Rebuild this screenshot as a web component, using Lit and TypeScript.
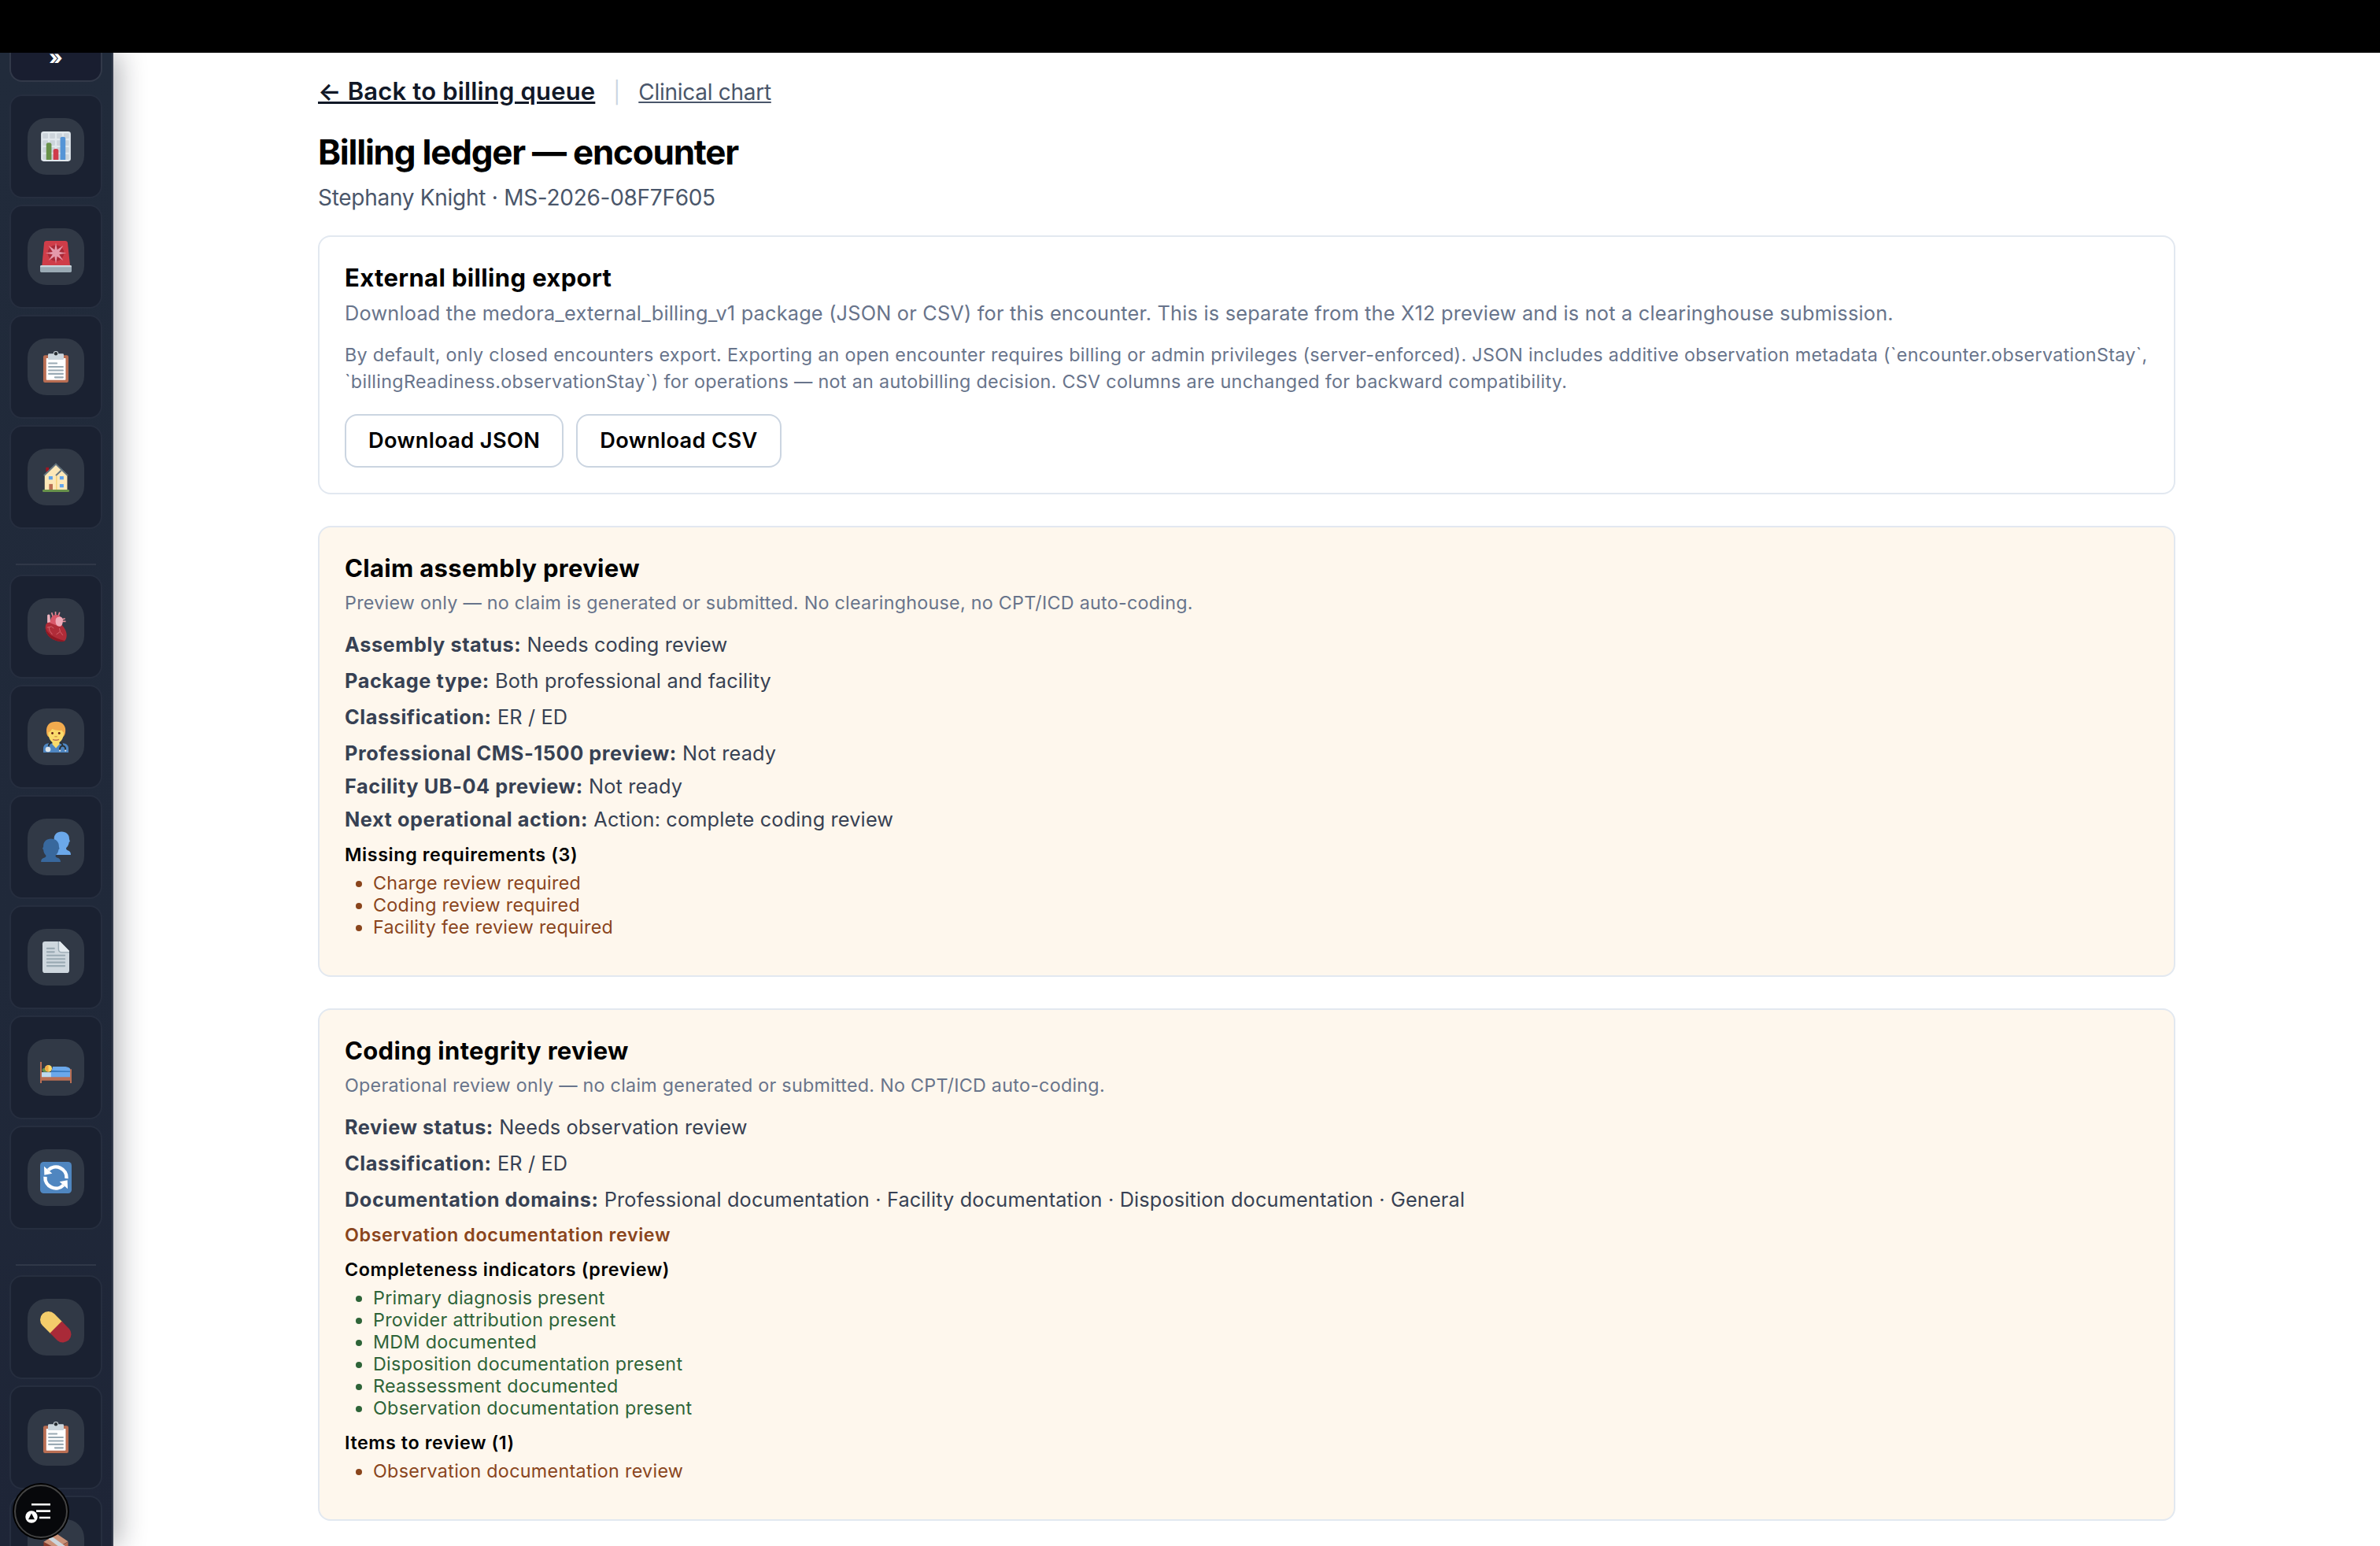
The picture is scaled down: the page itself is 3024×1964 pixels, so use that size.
import { LitElement, html, css, svg, nothing, TemplateResult } from 'lit';
import { customElement, property } from 'lit/decorators.js';

const clipboard = svg`
  <rect x="3.6" y="4.8" width="28.8" height="31.2" rx="2" fill="#b96e53" />
  <rect x="7" y="8" width="22.2" height="25" rx="0.6" fill="#fff" />
  <circle cx="18" cy="2.9" r="2.9" fill="#ccd6dd" />
  <rect x="9" y="3" width="18" height="7" rx="1.2" fill="#ccd6dd" />
  <circle cx="18" cy="2.9" r="2" fill="#292f33" />
  <path
    d="M10 14h9M10 18h16M10 22h16M10 26h16M17 30h9"
    stroke="#9aaab4" stroke-width="1.9" stroke-linecap="round"
  />`;

const icons: Record<string, TemplateResult> = {
  chart: svg`
    <rect x="1" y="1" width="34" height="34" rx="3" fill="#e1e8ed" />
    ${[3, 11, 19, 27].map((y) =>
      [3, 11, 19, 27].map(
        (x) => svg`<rect x=${x} y=${y} width="6" height="6" rx="0.8" fill="#ccd4db" />`
      )
    )}
    <path d="M7 33.4V16q0-2.2 3-2.2t3 2.2v17.4z" fill="#68924a" />
    <path d="M15 33.4V23q0-2.2 3-2.2t3 2.2v10.4z" fill="#cf3d4b" />
    <path d="M23 33.4V9.2q0-2.2 3-2.2t3 2.2v24.2z" fill="#5594d6" />`,
  siren: svg`
    <path d="M4.5 2.5Q4.8 0 7.3 0h21.4q2.5 0 2.8 2.5L34.3 29H2z" fill="#cf3d49" />
    <circle cx="18" cy="14" r="9.3" fill="#a92a38" />
    <path
      d="M18 2l1.5 8.2 6.9-4.7-4.6 7 8.2 1.5-8.2 1.5 4.6 6.9-6.9-4.6L18 26l-1.5-8.2-6.9 4.6 4.6-6.9L6 14l8.2-1.5-4.6-7 6.9 4.7z"
      fill="#e59aac"
    />
    <rect y="28" width="36" height="8" rx="1.5" fill="#9aaab4" />
    <path d="M0 30v-.6Q0 28 1.5 28h33q1.5 0 1.5 1.4v.6z" fill="#ccd6dd" />`,
  clipboard,
  house: svg`
    <path d="M6.6 12V7h3.3v5z" fill="#a01522" />
    <path d="M5.2 33V15.5L18 3l13 13v17z" fill="#fde8b8" />
    <path d="M18.8 17v16" stroke="#f0c55a" stroke-width="0.9" />
    <path
      d="M4.3 16.5L18 3.2l13.7 13.3M18 16.3l6-5.8"
      fill="none" stroke="#66757f" stroke-width="1.8"
    />
    <path d="M9.8 17h4.5v4H9.8zM22.4 17h4.5v4h-4.5zM22.4 26h4.5v4h-4.5z" fill="#61a4ec" />
    <path d="M10.2 26h4.2v7h-4.2z" fill="#b96e53" />
    <rect x="2.7" y="32.4" width="30.6" height="2.7" rx="1.2" fill="#68924a" />`,
  heart: svg`
    <path d="M8.2 14V5q1.7-2 3 0l.6 9z" fill="#efb4c0" />
    <path
      d="M14.5 6l-1.3-4M17.6 5V1M21 5.5l1.3-4M25 10l3.5-1.3M25 12h4.3"
      stroke="#e88d98" stroke-width="1.5" fill="none"
    />
    <path
      d="M6.5 16c1-3 4-3 6-3l10 1c4 3 8 9 7.8 14-.1 4-1.5 7-4.3 7.2C19 35 13 32.5 9.5 28.5 6.5 25 5.3 20 6.5 16z"
      fill="#b02c38"
    />
    <path
      d="M6.2 19c1 6 8 12 22 15.3-1 1-1.7 1-3.2 1C19 35 13 32.5 9.5 28.5c-2.5-3-3.6-6-3.3-9.5z"
      fill="#8e1823"
    />
    <path d="M11.5 14c0-6 2.5-9.5 6.5-9.5s7 3 6.7 8L20 17z" fill="#d9586a" />
    <path d="M18 9c3-3.5 8-2.5 8 1.5 0 5-1.5 7.3-4 7.3-4 0-5-5-4-8.8z" fill="#efabb9" />
    <path
      d="M8 19l5-1 2.5 2M10 18.5l1 4.5 3 4M22 20l1 4 3 4M22.5 24l-4 3"
      stroke="#d4626d" stroke-width="0.9" fill="none"
    />`,
  doctor: svg`
    <path d="M3.6 36v-4.5c0-3.5 2.5-6 6-6h16.8c3.5 0 6 2.5 6 6V36z" fill="#4e86c1" />
    <path d="M14 22h8v4.5L18 31l-4-4.5z" fill="#fadb6b" />
    <path
      d="M7.3 13C6.5 4.5 11 .7 18.5 .7 26 .7 30 6 28.8 13c-.3 2.5-1.5 4.5-2.5 5H9.5c-1-.5-2-2.5-2.2-5z"
      fill="#f2ab4e"
    />
    <path
      d="M9.3 13c2-.5 3.5-2.5 4.5-4 3 1.5 7 2 11 1.5.7 1.5 1.3 2 2.2 2.5 0 7-3.5 12.5-9 12.5S9.3 20 9.3 13z"
      fill="#fadb6b"
    />
    <circle cx="14" cy="13.9" r="1.3" fill="#662113" />
    <circle cx="21.8" cy="13.9" r="1.3" fill="#662113" />
    <path d="M16.5 17.8h3" stroke="#c88a3e" stroke-width="1" />
    <path d="M14.5 21c2 1 5 1 7 0" stroke="#b96e53" stroke-width="1.4" fill="none" />
    <path
      d="M13 24.5c-2 .5-3 2-3.5 4.5M22.5 24.5c2 .5 3 2 3.3 3.5M22.5 33c0-6 6.5-6 6.5 0"
      stroke="#292f33" stroke-width="1.7" fill="none"
    />
    <circle cx="9" cy="32.4" r="3" fill="#dfe5ea" />
    <circle cx="22.6" cy="33.8" r="1" fill="#dfe5ea" />
    <circle cx="29" cy="33.8" r="1" fill="#dfe5ea" />`,
  people: svg`
    <path
      d="M16 9.5C15.5 4 19 .5 24.5 .5S33.5 4 33.3 9l.8 2.6-1 .8c-.3 3-1.6 5-3.2 6.6-.5 1.2 0 2.3 1.5 2.8 2.5.9 3.7 2.2 3.7 5.2H15V16z"
      fill="#6ba8ea"
    />
    <path
      d="M3.7 17.5C3.5 12 7 8.5 12.5 8.5s9.2 3.5 9 9l.6 2.6-1 .8c-.4 3-1.5 5-3.3 6.5-.5 1.2 0 2.2 1.5 2.7 2.8.9 4 2.2 4.1 4.9H1c0-3 1.5-4 4-4.9 1.5-.5 2-1.5 1.5-2.7C4.8 26 3.9 24 3.7 21l-1-.9z"
      fill="#38689d"
    />`,
  document: svg`
    <path d="M5.7 0H22.5L33.3 10.8V33q0 3-3 3H5.7q-3 0-3-3V3q0-3 3-3z" fill="#ced7de" />
    <path d="M21 0v8.5q0 4 4 4h8.3" fill="none" stroke="#9aaab4" stroke-width="1.2" />
    <path d="M22 0h.8L33.3 10.8v.9H25q-3 0-3-3z" fill="#e4eaef" />
    <path
      d="M8 8h8M8 12h8M8 16h20M8 20h20M8 24h20M8 28h20"
      stroke="#9aaab4" stroke-width="1.9" stroke-linecap="round"
    />`,
  bed: svg`
    <ellipse cx="5.5" cy="21" rx="3.2" ry="2.3" fill="#68924a" />
    <path d="M1.8 23.5h11V30h-11z" fill="#bddbf0" />
    <path d="M12.5 30v-6l2-7H29q4 .5 5.3 2.5V30z" fill="#6ba8ea" />
    <path d="M13 21.3q11 .7 21.3 .7v1.5H12.8z" fill="#3b7cc0" />
    <circle cx="9.5" cy="19.2" r="4" fill="#fadb6b" />
    <path d="M9.5 15.2v7.8q-4-1-4-3.9t4-3.9z" fill="#f2a843" />
    <path d="M.9 11.7V36M35.1 20v16" stroke="#b96e53" stroke-width="1.8" />
    <path d="M1 29h34v4H1z" fill="#b96e53" />`,
  refresh: svg`
    <rect width="36" height="36" rx="4" fill="#4f86c0" />
    <path
      d="M9.3 9.5A12.2 12.2 0 0 1 30.2 19M26.7 26.5A12.2 12.2 0 0 1 5.8 17"
      fill="none" stroke="#fff" stroke-width="4"
    />
    <path d="M4.5 5.2l.3 9.8 9-1.7zM31.5 30.8l-.3-9.8-9 1.7z" fill="#fff" />`,
  pill: svg`
    <path d="M9.5 9.5L18 18" stroke="#f4cd6b" stroke-width="19" stroke-linecap="round" />
    <path d="M24.7 11.3l8.5 8.5a9.5 9.5 0 0 1-13.4 13.4l-8.5-8.5z" fill="#a92a38" />`,
  package: svg`
    <path d="M4 11.5L18 19v17L4 28z" fill="#8a3a2a" />
    <path d="M32 11.5L18 19v17l14-8z" fill="#b96e53" />
    <path d="M4 11.5L19 2.3 32 11 18 19z" fill="#cb9278" />
    <path d="M9.5 8L13.5 5.5 29 16.5 24 19z" fill="#ccd6dd" />`,
};

const navGroups = [
  ['chart', 'siren', 'clipboard', 'house'],
  ['heart', 'doctor', 'people', 'document', 'bed', 'refresh'],
  ['pill', 'clipboard', 'package'],
];

@customElement('side-nav')
export class SideNav extends LitElement {
  static styles = css`
    :host {
      display: flex;
      flex-direction: column;
      flex: none;
      box-sizing: border-box;
      width: 144px;
      padding: 0 12px;
      border-right: 2px solid #333b4b;
      background: linear-gradient(180deg, #212b3b 0%, #20293a 60%, #1e2537 100%);
      box-shadow: 8px 0 32px rgba(15, 18, 30, 0.31);
      z-index: 1;
    }
    .toggle {
      box-sizing: border-box;
      flex: none;
      height: 37px;
      margin-bottom: 16px;
      border: 2px solid #323949;
      border-top: 0;
      border-radius: 0 0 16px 16px;
      background: #191e30;
      color: #fff;
      font-size: 25px;
      font-weight: 800;
      line-height: 12px;
      text-align: center;
    }
    .group {
      display: flex;
      flex-direction: column;
      flex: none;
      gap: 8px;
    }
    .group + .group {
      position: relative;
      margin-top: 44px;
      padding-top: 14px;
    }
    .group + .group::before {
      content: '';
      position: absolute;
      top: 0;
      left: 8px;
      right: 8px;
      height: 2px;
      background: #303848;
    }
    .tile {
      box-sizing: border-box;
      display: flex;
      align-items: center;
      justify-content: center;
      height: 132px;
      border: 2px solid #262e3f;
      border-radius: 16px;
      background: #1a2131;
    }
    .badge {
      display: flex;
      align-items: center;
      justify-content: center;
      width: 72px;
      height: 72px;
      border-radius: 24px;
      background: #313946;
    }
    svg {
      width: 40px;
      height: 40px;
    }
  `;

  render() {
    return html`
      <div class="toggle">»</div>
      ${navGroups.map(
        (group) => html`
          <div class="group">
            ${group.map(
              (name) => html`
                <div class="tile">
                  <div class="badge"><svg viewBox="0 0 36 36">${icons[name]}</svg></div>
                </div>
              `
            )}
          </div>
        `
      )}
    `;
  }
}

interface Row {
  kind: 'field' | 'tight' | 'flag' | 'list';
  label: string;
  value?: string;
  tone?: string;
  items?: string[];
}

const claimRows: Row[] = [
  { kind: 'field', label: 'Assembly status:', value: 'Needs coding review' },
  { kind: 'field', label: 'Package type:', value: 'Both professional and facility' },
  { kind: 'field', label: 'Classification:', value: 'ER / ED' },
  { kind: 'field', label: 'Professional CMS-1500 preview:', value: 'Not ready' },
  { kind: 'tight', label: 'Facility UB-04 preview:', value: 'Not ready' },
  { kind: 'tight', label: 'Next operational action:', value: 'Action: complete coding review' },
  {
    kind: 'list',
    label: 'Missing requirements (3)',
    tone: 'warn',
    items: ['Charge review required', 'Coding review required', 'Facility fee review required'],
  },
];

const codingRows: Row[] = [
  { kind: 'field', label: 'Review status:', value: 'Needs observation review' },
  { kind: 'field', label: 'Classification:', value: 'ER / ED' },
  {
    kind: 'field',
    label: 'Documentation domains:',
    value:
      'Professional documentation · Facility documentation · Disposition documentation · General',
  },
  { kind: 'flag', label: 'Observation documentation review' },
  {
    kind: 'list',
    label: 'Completeness indicators (preview)',
    tone: 'ok',
    items: [
      'Primary diagnosis present',
      'Provider attribution present',
      'MDM documented',
      'Disposition documentation present',
      'Reassessment documented',
      'Observation documentation present',
    ],
  },
  {
    kind: 'list',
    label: 'Items to review (1)',
    tone: 'warn',
    items: ['Observation documentation review'],
  },
];

@customElement('review-card')
export class ReviewCard extends LitElement {
  static styles = css`
    :host {
      display: block;
      box-sizing: border-box;
      padding: 32px;
      border: 2px solid #e2e8f0;
      border-radius: 16px;
      background: #fef7ed;
    }
    h2 {
      margin: 0;
      font-size: 31px;
      font-weight: 700;
      line-height: 40px;
      letter-spacing: 0.32px;
      color: #000;
    }
    .note {
      margin: 9px 0 23px;
      font-size: 23.3px;
      line-height: 29px;
      letter-spacing: 0.26px;
      color: #68748b;
    }
    .row {
      margin-top: 15px;
      font-size: 25.3px;
      line-height: 31px;
      letter-spacing: 0.15px;
      color: #374153;
    }
    .row b {
      letter-spacing: 0.56px;
    }
    .note + .row {
      margin-top: 0;
    }
    .tight {
      margin-top: 11px;
    }
    .flag,
    .subhead {
      margin-top: 15px;
      font-size: 23.3px;
      font-weight: 600;
      line-height: 29px;
      letter-spacing: 0.6px;
      color: #000;
    }
    ul {
      margin: 7.5px 0 15.5px;
      padding-left: 36px;
      font-size: 23.3px;
      line-height: 28px;
      letter-spacing: 0.3px;
    }
    .flag,
    .warn {
      color: #8a451c;
    }
    .ok {
      color: #2e6438;
    }
  `;

  @property() heading = '';
  @property() note = '';
  @property({ attribute: false }) rows: Row[] = [];

  renderRow(row: Row) {
    if (row.kind === 'flag') {
      return html`<div class="flag">${row.label}</div>`;
    }
    if (row.kind === 'list') {
      return html`
        <div class="subhead">${row.label}</div>
        <ul class=${row.tone ?? nothing}>
          ${row.items?.map((item) => html`<li>${item}</li>`)}
        </ul>
      `;
    }
    return html`<div class="row ${row.kind}"><b>${row.label}</b> ${row.value}</div>`;
  }

  render() {
    return html`
      <h2>${this.heading}</h2>
      <div class="note">${this.note}</div>
      ${this.rows.map((row) => this.renderRow(row))}
    `;
  }
}

const exportHint = [
  'By default, only closed encounters export. Exporting an open encounter requires billing or admin privileges (server-enforced). JSON includes additive observation metadata (`encounter.observationStay`,',
  '`billingReadiness.observationStay`) for operations — not an autobilling decision. CSV columns are unchanged for backward compatibility.',
];

@customElement('app-root')
export class AppRoot extends LitElement {
  static styles = css`
    :host {
      display: flex;
      flex-direction: column;
      position: relative;
      width: 3024px;
      height: 1964px;
      overflow: hidden;
      background: #fff;
      font-family: Inter, 'Liberation Sans', sans-serif;
    }
    .topbar {
      flex: none;
      height: 67px;
      background: #000;
      z-index: 2;
    }
    .body {
      display: flex;
      flex: 1;
      min-height: 0;
    }
    main {
      flex: 1;
      padding: 29px 260px 0;
    }
    .links {
      display: flex;
      align-items: baseline;
      height: 40px;
      line-height: 40px;
    }
    .back {
      font-size: 31px;
      font-weight: 600;
      letter-spacing: 0.17px;
      color: #111827;
      text-decoration: underline;
      text-decoration-thickness: 3px;
    }
    .sep {
      margin: 0 23px;
      font-size: 27px;
      color: #cbd5e1;
    }
    .chart {
      font-size: 28px;
      letter-spacing: -0.28px;
      color: #4a566a;
      text-decoration: underline;
    }
    h1 {
      margin: 30px 0 13px;
      font-size: 44px;
      font-weight: 700;
      line-height: 54px;
      letter-spacing: -1.24px;
    }
    .patient {
      margin-bottom: 30px;
      font-size: 28px;
      line-height: 36px;
      letter-spacing: -0.28px;
      color: #4a566a;
    }
    .export {
      box-sizing: border-box;
      height: 329px;
      padding: 32px;
      border: 2px solid #e2e8f0;
      border-radius: 16px;
    }
    h2 {
      margin: 0;
      font-size: 31px;
      font-weight: 700;
      line-height: 40px;
      letter-spacing: 0.36px;
    }
    .lead {
      margin-top: 9px;
      font-size: 25.3px;
      line-height: 31px;
      letter-spacing: 0.207px;
      color: #68748b;
    }
    .hint {
      margin-top: 21px;
      font-size: 23.3px;
      line-height: 33.6px;
      letter-spacing: 0.32px;
      white-space: nowrap;
      color: #68748b;
    }
    .actions {
      display: flex;
      gap: 16px;
      margin-top: 24.8px;
    }
    .btn {
      box-sizing: border-box;
      height: 68px;
      padding: 0 28px;
      border: 2px solid #cbd5e1;
      border-radius: 16px;
      font-size: 27.2px;
      font-weight: 600;
      line-height: 63px;
      letter-spacing: 0.36px;
    }
    review-card {
      margin-top: 40px;
    }
    .fab {
      position: absolute;
      left: 16px;
      top: 1884px;
      width: 72px;
      height: 72px;
      z-index: 3;
    }
  `;

  render() {
    return html`
      <div class="topbar"></div>
      <div class="body">
        <side-nav></side-nav>
        <main>
          <div class="links">
            <a class="back">← Back to billing queue</a>
            <span class="sep">|</span>
            <a class="chart">Clinical chart</a>
          </div>
          <h1>Billing ledger — encounter</h1>
          <div class="patient">Stephany Knight · MS-2026-08F7F605</div>
          <section class="export">
            <h2>External billing export</h2>
            <div class="lead">
              Download the medora_external_billing_v1 package (JSON or CSV) for this encounter. This
              is separate from the X12 preview and is not a clearinghouse submission.
            </div>
            <div class="hint">${exportHint.map((line) => html`<div>${line}</div>`)}</div>
            <div class="actions">
              <div class="btn">Download JSON</div>
              <div class="btn">Download CSV</div>
            </div>
          </section>
          <review-card
            heading="Claim assembly preview"
            note="Preview only — no claim is generated or submitted. No clearinghouse, no CPT/ICD auto-coding."
            .rows=${claimRows}
          ></review-card>
          <review-card
            heading="Coding integrity review"
            note="Operational review only — no claim generated or submitted. No CPT/ICD auto-coding."
            .rows=${codingRows}
          ></review-card>
        </main>
      </div>
      <svg class="fab" viewBox="0 0 72 72">
        <circle cx="36" cy="36" r="36" fill="#000" />
        <circle cx="36" cy="36" r="33" fill="#07080b" stroke="#444" stroke-width="2" />
        <path
          d="M24 27.2h24M30 35.6h18M34 44h14"
          stroke="#fff" stroke-width="2.6"
        />
        <circle cx="24" cy="43" r="9" fill="#07080b" />
        <circle cx="24" cy="43" r="7.7" fill="#fff" />
        <path d="M24 38.5l4 7.8h-8z" fill="#07080b" />
      </svg>
    `;
  }
}
